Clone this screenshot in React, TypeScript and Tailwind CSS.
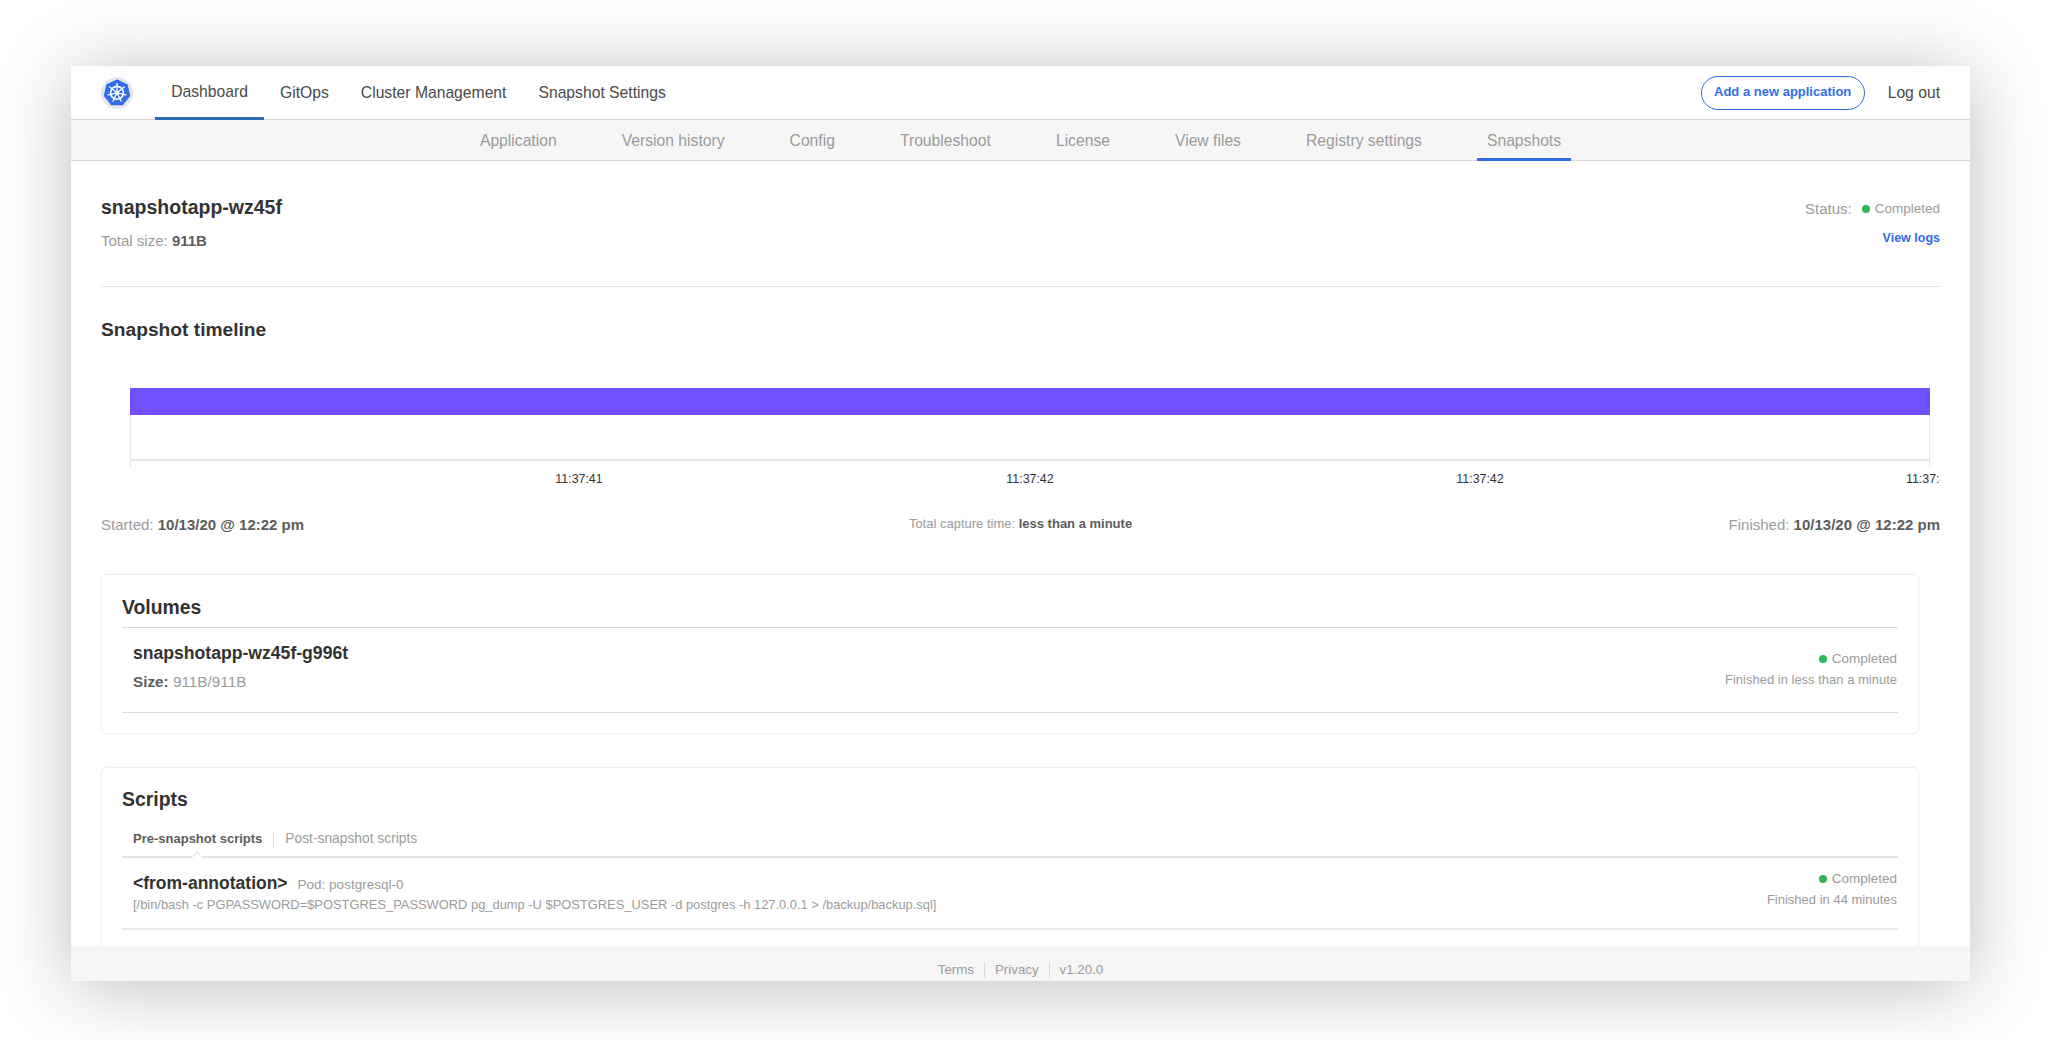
const font = "font-['Liberation_Sans',Arial,sans-serif]";

function Logo() {
  const spokes = [0, 51.4, 102.8, 154.3, 205.7, 257.1, 308.6];
  return (
    <svg width="32" height="32" viewBox="0 0 32 32">
      <circle cx="16" cy="16" r="16" fill="#e4e7ee" />
      <path
        d="M16 3.4 L25.8 8.1 L28.2 18.7 L21.4 27.2 L10.6 27.2 L3.8 18.7 L6.2 8.1 Z"
        fill="#326de6"
        stroke="#326de6"
        strokeWidth="2"
        strokeLinejoin="round"
      />
      <circle cx="16" cy="15.8" r="6.4" fill="none" stroke="#fff" strokeWidth="1.6" />
      <circle cx="16" cy="15.8" r="1.6" fill="#fff" />
      {spokes.map((a) => (
        <line
          key={a}
          x1="16"
          y1="15.8"
          x2="16"
          y2="6.6"
          stroke="#fff"
          strokeWidth="1.3"
          strokeLinecap="round"
          transform={`rotate(${a} 16 15.8)`}
        />
      ))}
    </svg>
  );
}

function Status({ text }: { text: string }) {
  return (
    <div className="flex flex-col items-end mr-[1px]">
      <div className="flex items-center gap-[5px] text-[13.5px] leading-[16px] text-[#9b9b9b]">
        <span className="w-2 h-2 rounded-full bg-[#2db757]" />
        Completed
      </div>
      <div className="mt-[5px] text-[13px] leading-[16px] text-[#9b9b9b]">{text}</div>
    </div>
  );
}

export default function App() {
  return (
    <div className={`${font} h-[1040px] overflow-hidden bg-white pt-[66px] pl-[71px]`}>
      <div className="w-[1899px] h-[915px] flex flex-col bg-white shadow-[0_6px_70px_rgba(0,0,0,0.26)]">
        <header className="h-[54px] shrink-0 flex items-center border-b border-[#d9d9d9] pl-[30px] pr-[30px]">
          <Logo />
          <nav className="ml-[22px] flex items-stretch h-full text-[15.7px] text-[#4a4a4a]">
            <a className="w-[109px] flex items-center justify-center border-b-[3px] border-[#2b6cb0] -mb-px">Dashboard</a>
            <a className="ml-[16px] flex items-center">GitOps</a>
            <a className="ml-[32px] flex items-center">Cluster Management</a>
            <a className="ml-[32px] flex items-center">Snapshot Settings</a>
          </nav>
          <div className="ml-auto flex items-center">
            <button className="h-[34px] w-[164px] rounded-full border border-[#326de6] text-[13px] leading-[30px] pb-[2px] font-bold text-[#326de6]">
              Add a new application
            </button>
            <a className="ml-[23px] text-[15.7px] text-[#4a4a4a]">Log out</a>
          </div>
        </header>
        <div className="h-[41px] shrink-0 flex justify-center items-stretch gap-[45px] bg-[#f6f6f6] border-b border-[#d9d9d9] text-[15.7px] text-[#9b9b9b]">
          {["Application", "Version history", "Config", "Troubleshoot", "License", "View files", "Registry settings"].map((t) => (
            <a key={t} className="px-[10px] pt-[2px] flex items-center">{t}</a>
          ))}
          <a className="px-[10px] pt-[3px] flex items-center border-b-[3px] border-[#326de6] -mb-px">Snapshots</a>
        </div>
        <main className="flex-1 min-h-0 overflow-hidden px-[30px]">
          <div className="flex justify-between h-[126px] border-b border-[#e3e3e3] pt-[35px]">
            <div>
              <h1 className="text-[19.5px] leading-[22px] font-bold text-[#323232]">snapshotapp-wz45f</h1>
              <p className="mt-[14px] text-[15px] leading-[18px] text-[#9b9b9b]">
                Total size: <b className="text-[#5c5c5c]">911B</b>
              </p>
            </div>
            <div className="flex flex-col items-end mt-[3px]">
              <div className="flex items-center text-[13.5px] leading-[20px] text-[#9b9b9b]">
                <span className="text-[15px] mr-[10px]">Status:</span>
                <span className="w-2 h-2 rounded-full bg-[#2db757] mr-[5px]" />
                Completed
              </div>
              <a className="mt-[11px] text-[12.5px] leading-[16px] font-bold text-[#326de6]">View logs</a>
            </div>
          </div>
          <h2 className="mt-[31px] text-[19.2px] leading-[24px] font-bold text-[#323232]">Snapshot timeline</h2>
          <svg className="block mt-[40px]" width="1839" height="108" viewBox="0 0 1839 108">
            <line x1="29.5" y1="0" x2="29.5" y2="85" stroke="#e8e8e8" />
            <line x1="1828.5" y1="0" x2="1828.5" y2="85" stroke="#e8e8e8" />
            <line x1="29" y1="78" x2="1829" y2="78" stroke="#e6e6e6" strokeWidth="2" />
            <rect x="29" y="6" width="1800" height="27" fill="#7050ff" />
            <g fontSize="12.4" fill="#323232" fontFamily="'Liberation Sans', Arial, sans-serif">
              <text x="478" y="101" textAnchor="middle">11:37:41</text>
              <text x="929" y="101" textAnchor="middle">11:37:42</text>
              <text x="1379" y="101" textAnchor="middle">11:37:42</text>
              <text x="1805" y="101">11:37:42</text>
            </g>
          </svg>
          <div className="mt-[23px] grid grid-cols-3 items-center h-[24px]">
            <p className="text-[15px] text-[#9b9b9b]">Started: <b className="text-[#5c5c5c]">10/13/20 @ 12:22 pm</b></p>
            <p className="text-[13px] text-[#9b9b9b] text-center -mt-[2px]">Total capture time: <b className="text-[#5c5c5c]">less than a minute</b></p>
            <p className="text-[15px] text-[#9b9b9b] text-right">Finished: <b className="text-[#5c5c5c]">10/13/20 @ 12:22 pm</b></p>
          </div>
          <section className="mt-[37px] mr-[21px] h-[160px] rounded-[6px] border border-[#eeeeee] shadow-[0_0_3px_rgba(0,0,0,0.05)] px-[20px]">
            <h3 className="pt-[21px] text-[19.4px] leading-[22px] font-bold text-[#323232]">Volumes</h3>
            <div className="mt-[9px] h-[86px] border-y border-[#dcdcdc] pl-[11px] flex justify-between">
              <div>
                <div className="mt-[14px] text-[17.6px] leading-[22px] font-bold text-[#323232]">snapshotapp-wz45f-g996t</div>
                <div className="mt-[9px] text-[15.3px] leading-[18px] text-[#9b9b9b]"><b className="text-[#5c5c5c]">Size:</b> 911B/911B</div>
              </div>
              <div className="mt-[23px]"><Status text="Finished in less than a minute" /></div>
            </div>
          </section>
          <section className="mt-[33px] mr-[21px] h-[240px] rounded-[6px] border border-[#eeeeee] shadow-[0_0_3px_rgba(0,0,0,0.05)] px-[20px]">
            <h3 className="pt-[20px] text-[19.4px] leading-[22px] font-bold text-[#323232]">Scripts</h3>
            <div className="relative mt-[11px] h-[37px] border-b-2 border-[#e3e3e3] pl-[11px] flex items-start pt-[10px] text-[13px] leading-[16px]">
              <span className="font-bold text-[#5c5c5c] pr-[11px] border-r border-[#dcdcdc]">Pre-snapshot scripts</span>
              <span className="pl-[11px] text-[13.8px] text-[#9b9b9b]">Post-snapshot scripts</span>
              <span className="absolute left-[71px] -bottom-[2px] w-2 h-2 bg-white border-l border-t border-[#e3e3e3] rotate-45 translate-y-[3px]" />
            </div>
            <div className="h-[72px] border-b-2 border-[#e8e8e8] pl-[11px] flex justify-between">
              <div>
                <div className="mt-[14px] flex items-baseline">
                  <span className="text-[17.5px] leading-[22px] font-bold text-[#323232]">&lt;from-annotation&gt;</span>
                  <span className="ml-[10px] text-[13.5px] text-[#9b9b9b]">Pod: postgresql-0</span>
                </div>
                <div className="mt-[2px] text-[12.9px] leading-[16px] text-[#9b9b9b]">
                  [/bin/bash -c PGPASSWORD=$POSTGRES_PASSWORD pg_dump -U $POSTGRES_USER -d postgres -h 127.0.0.1 &gt; /backup/backup.sql]
                </div>
              </div>
              <div className="mt-[13px]"><Status text="Finished in 44 minutes" /></div>
            </div>
          </section>
        </main>
        <footer className="h-[35px] shrink-0 bg-[#f6f6f6] flex items-center justify-center text-[13.3px] leading-[16px] text-[#9b9b9b] pt-[12px]">
          <span className="pr-[10px] border-r border-[#dcdcdc]">Terms</span>
          <span className="px-[10px] border-r border-[#dcdcdc]">Privacy</span>
          <span className="pl-[10px]">v1.20.0</span>
        </footer>
      </div>
    </div>
  );
}
